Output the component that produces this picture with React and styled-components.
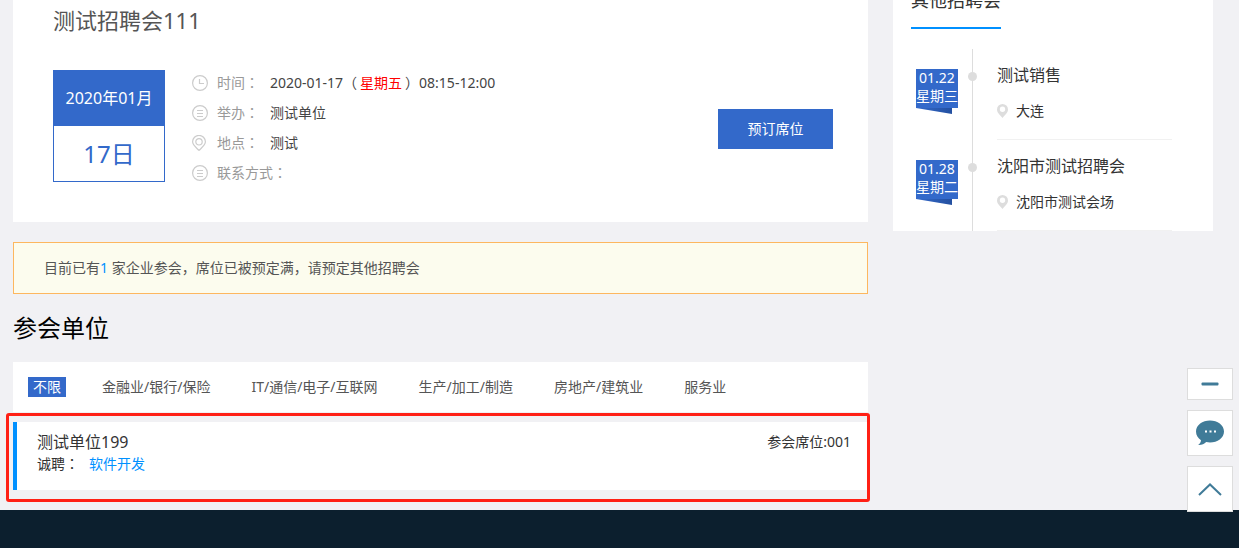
import React from "react";
import styled, { createGlobalStyle } from "styled-components";

const trades = [
  "不限",
  "金融业/银行/保险",
  "IT/通信/电子/互联网",
  "生产/加工/制造",
  "房地产/建筑业",
  "服务业",
];

const otherFairs = [
  { id: 1, date: "01.22", week: "星期三", name: "测试销售", place: "大连" },
  {
    id: 2,
    date: "01.28",
    week: "星期二",
    name: "沈阳市测试招聘会",
    place: "沈阳市测试会场",
  },
];

const ClockIcon = () => (
  <LineIcon viewBox="0 0 16 16">
    <circle cx="8" cy="8" r="7.4" />
    <path d="M7.5 4v4.5H12" />
  </LineIcon>
);

const ListIcon = () => (
  <LineIcon viewBox="0 0 16 16">
    <circle cx="8" cy="8" r="7.4" />
    <path d="M5 5.5h6M5 8.500h6M5 11.500h6" />
  </LineIcon>
);

const PlaceIcon = () => (
  <LineIcon viewBox="0 0 16 16">
    <path d="M7 15.4C4.6 12.8.6 10.300.6 6.8a6.400 6.400 0 0 1 12.800 0c0 3.500-4 6-6.400 8.600z" />
    <circle cx="7" cy="6.800" r="3.200" />
  </LineIcon>
);

const PinIcon = () => (
  <Pin viewBox="0 0 11 14">
    <path
      fillRule="evenodd"
      d="M5.500 0A5.500 5.500 0 0 0 0 5.500C0 9 3.500 11 5.500 14 7.500 11 11 9 11 5.500A5.500 5.500 0 0 0 5.500 0zm0 2.500a2.700 2.700 0 1 1 0 5.400 2.700 2.700 0 0 1 0-5.400z"
    />
  </Pin>
);

const InfoRow = ({ icon, label, children }) => (
  <Info>
    {icon}
    <InfoLabel>
      {label}
      <Colon>：</Colon>
    </InfoLabel>
    <InfoValue>{children}</InfoValue>
  </Info>
);

const App = () => {
  const [trade, setTrade] = React.useState("不限");

  return (
    <React.Fragment>
      <GlobalStyle />
      <Wrap>
        <Main>
          <FairCard>
            <FairTitle>测试招聘会111</FairTitle>
            <FairBody>
              <DateBox>
                <DateMonth>2020年01月</DateMonth>
                <DateDay>17日</DateDay>
              </DateBox>
              <InfoList>
                <InfoRow icon={<ClockIcon />} label="时间">
                  2020-01-17（<Red>星期五</Red>）08:15-12:00
                </InfoRow>
                <InfoRow icon={<ListIcon />} label="举办">
                  测试单位
                </InfoRow>
                <InfoRow icon={<PlaceIcon />} label="地点">
                  测试
                </InfoRow>
                <InfoRow icon={<ListIcon />} label="联系方式" />
              </InfoList>
              <BookButton type="button">预订席位</BookButton>
            </FairBody>
          </FairCard>

          <Notice>
            目前已有<Blue>1</Blue> 家企业参会，席位已被预定满，请预定其他招聘会
          </Notice>

          <SectionTitle>参会单位</SectionTitle>

          <TradeBar>
            {trades.map((t) => (
              <TradeButton
                key={t}
                type="button"
                $active={t === trade}
                onClick={() => setTrade(t)}
              >
                {t}
              </TradeButton>
            ))}
          </TradeBar>

          <Marked>
            <Company>
              <div>
                <CompanyName>测试单位199</CompanyName>
                <Jobs>
                  <span>
                    诚聘<Colon>：</Colon>
                  </span>
                  <JobLink href="#job">软件开发</JobLink>
                </Jobs>
              </div>
              <Seat>参会席位:001</Seat>
            </Company>
          </Marked>
        </Main>

        <Side>
          <SideTitle>其他招聘会</SideTitle>
          <FairList>
            {otherFairs.map((f) => (
              <FairItem key={f.id}>
                <Badge>
                  <BadgeText>
                    {f.date}
                    <br />
                    {f.week}
                  </BadgeText>
                  <Fold />
                </Badge>
                <Rail>
                  <Dot />
                </Rail>
                <FairInfo>
                  <FairName>{f.name}</FairName>
                  <FairPlace>
                    <PinIcon />
                    {f.place}
                  </FairPlace>
                </FairInfo>
              </FairItem>
            ))}
          </FairList>
        </Side>
      </Wrap>
      <Footer />

      <Tools>
        <ToolButton type="button" $short aria-label="收起">
          <svg width="18" height="4" viewBox="0 0 18 4">
            <rect x="0.500" y="0.500" width="17" height="3" rx="1" fill="#407b98" />
          </svg>
        </ToolButton>
        <ToolButton type="button" aria-label="在线咨询">
          <svg width="28" height="26" viewBox="0 0 28 26">
            <path
              d="M14 .5C6.500.5 0 5 0 11.500c0 3.700 2 6.700 5 8.700-.2 2-1.200 3.500-2.800 4.800 3.300.2 6-.9 8-2.900 1.200.3 2.500.4 3.800.4 7.500 0 14-4.500 14-11S21.500.5 14 .5z"
              fill="#407b98"
            />
            <path d="M9 10.500h2v2H9zM13.500 10.500h2v2h-2zM18 10.500h2v2h-2z" fill="#fff" />
          </svg>
        </ToolButton>
        <ToolButton type="button" aria-label="回到顶部">
          <svg width="24" height="13" viewBox="0 0 24 13">
            <path
              d="M1 12 12 1.500 23 12"
              fill="none"
              stroke="#407b98"
              strokeWidth="2"
            />
          </svg>
        </ToolButton>
      </Tools>
    </React.Fragment>
  );
};

const GlobalStyle = createGlobalStyle`
  * {
    box-sizing: border-box;
  }
  body {
    margin: 0;
    background: #f1f1f4;
    color: #333;
    font-family: "Noto Sans", "Noto Sans CJK SC", sans-serif;
    font-size: 14px;
    line-height: 20px;
  }
  button {
    border: 0;
    font: inherit;
    cursor: pointer;
  }
  h1, h2, h3, p, ul {
    margin: 0;
    padding: 0;
    font-weight: 400;
    list-style: none;
  }
`;

const Wrap = styled.div`
  display: flex;
  align-items: flex-start;
  gap: 25px;
  padding: 0 26px 20px 13px;
`;

const Main = styled.main`
  flex: 1;
  min-width: 0;
`;

const FairCard = styled.section`
  padding: 0 35px 34px 40px;
  background: #fff;
`;

const FairTitle = styled.h1`
  font-size: 22px;
  line-height: 40px;
  color: #555;
`;

const FairBody = styled.div`
  display: flex;
  align-items: flex-start;
  min-height: 118px;
  margin-top: 30px;
`;

const DateBox = styled.div`
  width: 112px;
  border: 1px solid #3369ca;
  text-align: center;
  color: #3369ca;
`;

const DateMonth = styled.div`
  background: #3369ca;
  color: #fff;
  font-size: 16px;
  line-height: 55px;
`;

const DateDay = styled.div`
  font-size: 24px;
  line-height: 55px;
`;

const InfoList = styled.ul`
  display: flex;
  flex: 1;
  flex-direction: column;
  gap: 4px;
  margin-left: 27px;
`;

const Info = styled.li`
  display: flex;
  align-items: center;
  line-height: 26px;
`;

const LineIcon = styled.svg`
  width: 16px;
  height: 16px;
  margin-right: 9px;
  fill: none;
  stroke: #ccc;
  stroke-width: 1.2;
`;

const InfoLabel = styled.span`
  margin-right: 11px;
  color: #999;
`;

const InfoValue = styled.span`
  color: #444;
`;

// 冒号居中显示
const Colon = styled.span`
  font-family: "Noto Sans CJK TC", sans-serif;
  line-height: 1;
`;

const Red = styled.span`
  margin: 0 3px;
  color: #f00;
`;

const Blue = styled.span`
  color: #0090ff;
`;

const BookButton = styled.button`
  align-self: center;
  width: 115px;
  height: 40px;
  padding: 0;
  background: #3369ca;
  color: #fff;
`;

const Notice = styled.p`
  margin-top: 20px;
  padding: 15px 30px;
  border: 1px solid #fdb75f;
  background: #fcfcee;
  color: #555;
`;

const SectionTitle = styled.h2`
  color: #000;
  font-size: 24px;
  line-height: 68px;
`;

const TradeBar = styled.div`
  display: flex;
  gap: 31px;
  padding: 15px;
  background: #fff;
`;

const TradeButton = styled.button`
  padding: 0 5px;
  background: ${(props) => (props.$active ? "#3369ca" : "transparent")};
  color: ${(props) => (props.$active ? "#fff" : "#555")};
  white-space: nowrap;
`;

const Marked = styled.div`
  position: relative;
  margin-top: 10px;
  &::after {
    content: "";
    position: absolute;
    inset: -9px -2px -12px -7px;
    border: 3px solid #ff2015;
    border-radius: 3px;
    pointer-events: none;
  }
`;

const Company = styled.article`
  display: flex;
  justify-content: space-between;
  padding: 9px 17px 15px 20px;
  border-left: 4px solid #0090ff;
  background: #fff;
  line-height: 22px;
`;

const CompanyName = styled.h3`
  font-size: 16px;
`;

const Jobs = styled.div`
  display: flex;
  gap: 10px;
`;

const JobLink = styled.a`
  color: #0090ff;
  text-decoration: none;
`;

const Seat = styled.span`
  white-space: nowrap;
`;

const Side = styled.aside`
  width: 320px;
  background: #fff;
`;

// 标题上半部分在可视区域外
const SideTitle = styled.h2`
  width: fit-content;
  margin: -27px 0 20px 18px;
  border-bottom: 2px solid #0090ff;
  font-size: 18px;
  line-height: 54px;
`;

const FairList = styled.ul`
  padding: 0 41px 0 23px;
`;

const FairItem = styled.li`
  display: flex;
`;

const Badge = styled.div`
  width: 42px;
  margin: 20px 10px 0 0;
`;

const BadgeText = styled.div`
  height: 39px;
  background: #3369ca;
  color: #fff;
  line-height: 18px;
  text-align: center;
`;

const Fold = styled.div`
  width: 36px;
  height: 6px;
  background: linear-gradient(90deg, #3369ca, #2450a0);
  clip-path: polygon(0 0, 100% 0, 100% 100%);
`;

const Rail = styled.div`
  width: 9px;
  padding-top: 23px;
  background: linear-gradient(#ddd, #ddd) center / 1px 100% no-repeat;
`;

const Dot = styled.div`
  height: 9px;
  border-radius: 50%;
  background: #ddd;
`;

const FairInfo = styled.div`
  flex: 1;
  margin-left: 20px;
  padding: 16px 0 18px;
  border-bottom: 1px solid #f1f1f1;
`;

const FairName = styled.h3`
  font-size: 16px;
`;

const FairPlace = styled.p`
  display: flex;
  align-items: center;
  gap: 8px;
  margin-top: 16px;
`;

const Pin = styled.svg`
  width: 11px;
  height: 14px;
  fill: #ddd;
`;

const Footer = styled.footer`
  height: 38px;
  background: #0c1f2e;
`;

const Tools = styled.div`
  position: fixed;
  right: 6px;
  bottom: 36px;
  display: flex;
  flex-direction: column;
  gap: 10px;
`;

const ToolButton = styled.button`
  display: flex;
  align-items: center;
  justify-content: center;
  width: 46px;
  height: ${(props) => (props.$short ? "32px" : "46px")};
  padding: 0;
  border: 1px solid #ddd;
  background: #fff;
`;

export default App;
